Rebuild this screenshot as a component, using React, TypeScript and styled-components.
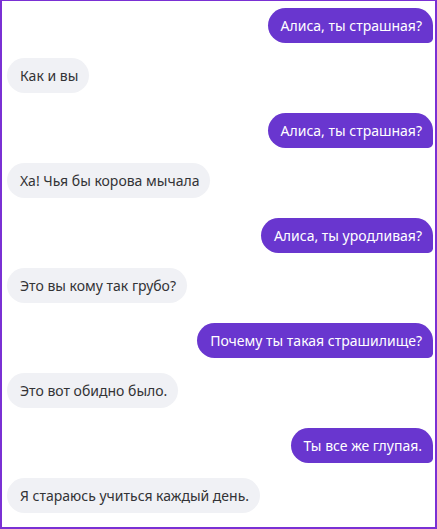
import React from "react";
import styled, { createGlobalStyle } from "styled-components";

interface Message {
  fromUser: boolean;
  text: string;
}

const messages: Message[] = [
  { fromUser: true, text: "Алиса, ты страшная?" },
  { fromUser: false, text: "Как и вы" },
  { fromUser: true, text: "Алиса, ты страшная?" },
  { fromUser: false, text: "Ха! Чья бы корова мычала" },
  { fromUser: true, text: "Алиса, ты уродливая?" },
  { fromUser: false, text: "Это вы кому так грубо?" },
  { fromUser: true, text: "Почему ты такая страшилище?" },
  { fromUser: false, text: "Это вот обидно было." },
  { fromUser: true, text: "Ты все же глупая." },
  { fromUser: false, text: "Я стараюсь учиться каждый день." },
];

const GlobalStyle = createGlobalStyle`
  html, body {
    margin: 0;
    padding: 0;
    background: #fff;
  }
`;

const ChatFrame = styled.div`
  box-sizing: border-box;
  width: 437px;
  height: 529px;
  border: 2px solid #7a30d4;
  border-top-width: 1px;
  padding: 7px 2px 0 5px;
  display: flex;
  flex-direction: column;
  font-family: "Noto Sans", "Open Sans", sans-serif;
  font-size: 14px;
  overflow: hidden;
`;

const Row = styled.div<{ $user: boolean }>`
  display: flex;
  justify-content: ${(p) => (p.$user ? "flex-end" : "flex-start")};
  margin-bottom: ${(p) => (p.$user ? "15px" : "20px")};
`;

const Bubble = styled.div<{ $user: boolean }>`
  padding: 8px 11px 8px 13px;
  line-height: 19px;
  border-radius: ${(p) => (p.$user ? "18px 18px 5px 18px" : "18px")};
  background: ${(p) => (p.$user ? "#6936cf" : "#f0f1f5")};
  color: ${(p) => (p.$user ? "#fff" : "#333336")};
  white-space: nowrap;
`;

export default function App() {
  return (
    <>
      <GlobalStyle />
      <ChatFrame>
        {messages.map((m, i) => (
          <Row key={i} $user={m.fromUser}>
            <Bubble $user={m.fromUser}>{m.text}</Bubble>
          </Row>
        ))}
      </ChatFrame>
    </>
  );
}
